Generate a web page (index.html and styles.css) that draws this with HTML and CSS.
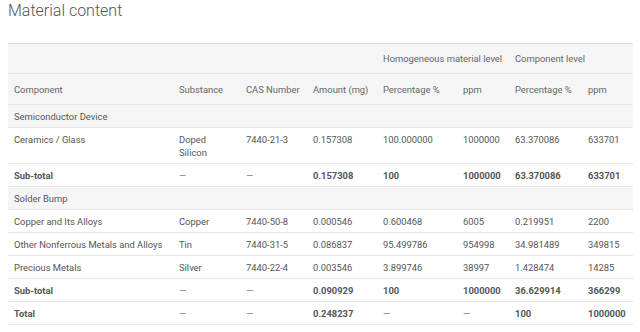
FILE: index.html
```html
<!DOCTYPE html>
<html lang="en">
<head>
    <meta charset="UTF-8">
    <title>Material content</title>
    <link rel="stylesheet" href="styles.css">
</head>
<body>
    <h2 class="page-title">Material content</h2>

    <table class="material-table">
        <colgroup>
            <col class="col-component">
            <col class="col-substance">
            <col class="col-cas">
            <col class="col-amount">
            <col class="col-hm-pct">
            <col class="col-hm-ppm">
            <col class="col-c-pct">
            <col class="col-c-ppm">
        </colgroup>
        <thead>
            <tr class="group-head">
                <th colspan="4"></th>
                <th colspan="2">Homogeneous material level</th>
                <th colspan="2">Component level</th>
            </tr>
            <tr class="col-head">
                <th>Component</th>
                <th>Substance</th>
                <th>CAS Number</th>
                <th>Amount (mg)</th>
                <th>Percentage %</th>
                <th>ppm</th>
                <th>Percentage %</th>
                <th>ppm</th>
            </tr>
        </thead>
        <tbody>
            <tr class="section">
                <td colspan="8">Semiconductor Device</td>
            </tr>
            <tr>
                <td>Ceramics / Glass</td>
                <td>Doped<br>Silicon</td>
                <td>7440-21-3</td>
                <td>0.157308</td>
                <td>100.000000</td>
                <td>1000000</td>
                <td>63.370086</td>
                <td>633701</td>
            </tr>
            <tr class="subtotal">
                <td>Sub-total</td>
                <td class="dash">—</td>
                <td class="dash">—</td>
                <td>0.157308</td>
                <td>100</td>
                <td>1000000</td>
                <td>63.370086</td>
                <td>633701</td>
            </tr>
            <tr class="section">
                <td colspan="8">Solder Bump</td>
            </tr>
            <tr>
                <td>Copper and Its Alloys</td>
                <td>Copper</td>
                <td>7440-50-8</td>
                <td>0.000546</td>
                <td>0.600468</td>
                <td>6005</td>
                <td>0.219951</td>
                <td>2200</td>
            </tr>
            <tr>
                <td>Other Nonferrous Metals and Alloys</td>
                <td>Tin</td>
                <td>7440-31-5</td>
                <td>0.086837</td>
                <td>95.499786</td>
                <td>954998</td>
                <td>34.981489</td>
                <td>349815</td>
            </tr>
            <tr>
                <td>Precious Metals</td>
                <td>Silver</td>
                <td>7440-22-4</td>
                <td>0.003546</td>
                <td>3.899746</td>
                <td>38997</td>
                <td>1.428474</td>
                <td>14285</td>
            </tr>
            <tr class="subtotal">
                <td>Sub-total</td>
                <td class="dash">—</td>
                <td class="dash">—</td>
                <td>0.090929</td>
                <td>100</td>
                <td>1000000</td>
                <td>36.629914</td>
                <td>366299</td>
            </tr>
            <tr class="subtotal">
                <td>Total</td>
                <td class="dash">—</td>
                <td class="dash">—</td>
                <td>0.248237</td>
                <td class="dash">—</td>
                <td class="dash">—</td>
                <td>100</td>
                <td>1000000</td>
            </tr>
        </tbody>
    </table>
</body>
</html>
```

FILE: styles.css
```css
* {
    margin: 0;
    padding: 0;
    box-sizing: border-box;
}

body {
    background: white;
    font-family: 'Roboto', sans-serif;
    color: #555;
    padding: 0 8px;
}

.page-title {
    font-size: 16px;
    font-weight: 300;
    color: #555;
    line-height: 22px;
    margin-bottom: 21px;
}

.material-table {
    width: 625px;
    border-collapse: collapse;
    table-layout: fixed;
    font-size: 9.4px;
    border-top: 1px solid #e0e0e0;
}

.col-component { width: 165px; }
.col-substance { width: 67px; }
.col-cas { width: 67px; }
.col-amount { width: 70px; }
.col-hm-pct { width: 80px; }
.col-hm-ppm { width: 52px; }
.col-c-pct { width: 73px; }
.col-c-ppm { width: 51px; }

th,
td {
    text-align: left;
    vertical-align: top;
    padding: 5px 6px 4px;
    line-height: 13px;
    white-space: nowrap;
    border-bottom: 1px solid #e6e6e6;
}

thead tr {
    background: #f5f5f5;
}

thead th {
    font-weight: 400;
    color: #666;
    vertical-align: middle;
    padding: 8px 6px;
}

.group-head th {
    height: 30px;
}

.col-head th {
    height: 31px;
}

.section td {
    background: #f5f5f5;
}

.subtotal td {
    font-weight: 700;
    color: #555;
}

.subtotal .dash {
    font-weight: 400;
    color: #777;
}
```
